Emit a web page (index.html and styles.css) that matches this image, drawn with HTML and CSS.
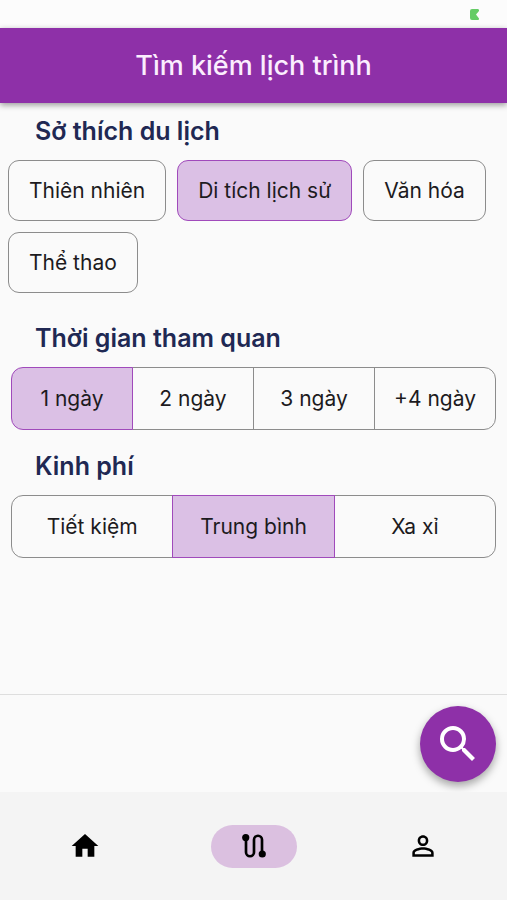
FILE: index.html
```html
<!DOCTYPE html>
<html lang="vi">
<head>
<meta charset="utf-8">
<meta name="viewport" content="width=device-width, initial-scale=1">
<title>Tìm kiếm lịch trình</title>
<link rel="stylesheet" href="styles.css">
</head>
<body>
<div class="status-bar">
  <svg class="battery" viewBox="0 0 10 11" aria-hidden="true"><path d="M2 0H8Q9.500 .3 9 2L6 5.500 9 9.500Q9.500 10.500 8 11H2Q0 11 0 9V2Q0 0 2 0Z"/></svg>
</div>
<header class="app-bar"><h1>Tìm kiếm lịch trình</h1></header>
<main class="content">
  <section class="group interests">
    <h2>Sở thích du lịch</h2>
    <div class="chips">
      <button type="button" class="chip" aria-pressed="false">Thiên nhiên</button>
      <button type="button" class="chip" aria-pressed="true">Di tích lịch sử</button>
      <button type="button" class="chip" aria-pressed="false">Văn hóa</button>
      <button type="button" class="chip" aria-pressed="false">Thể thao</button>
    </div>
  </section>
  <section class="group">
    <h2>Thời gian tham quan</h2>
    <div class="segments">
      <button type="button" class="segment" aria-pressed="true">1 ngày</button>
      <button type="button" class="segment" aria-pressed="false">2 ngày</button>
      <button type="button" class="segment" aria-pressed="false">3 ngày</button>
      <button type="button" class="segment" aria-pressed="false">+4 ngày</button>
    </div>
  </section>
  <section class="group">
    <h2>Kinh phí</h2>
    <div class="segments">
      <button type="button" class="segment" aria-pressed="false">Tiết kiệm</button>
      <button type="button" class="segment" aria-pressed="true">Trung bình</button>
      <button type="button" class="segment" aria-pressed="false">Xa xỉ</button>
    </div>
  </section>
</main>
<div class="action-bar">
  <button type="button" class="search" aria-label="Tìm kiếm">
    <svg viewBox="0 0 24 24" aria-hidden="true"><path d="M15.500 14h-.79l-.28-.27A6.471 6.471 0 0 0 16 9.500 6.500 6.500 0 1 0 9.500 16c1.610 0 3.090-.59 4.230-1.570l.27.28v.79l5 4.990L20.490 19l-4.990-5zm-6 0C7.010 14 5 11.990 5 9.500S7.010 5 9.500 5 14 7.010 14 9.500 11.990 14 9.500 14z"/></svg>
  </button>
</div>
<nav class="nav">
  <a href="#home" class="nav-item" aria-label="Trang chủ"><span class="indicator">
    <svg viewBox="0 0 24 24" aria-hidden="true"><path d="M10 20v-6h4v6h5v-8h3L12 3 2 12h3v8z"/></svg></span></a>
  <a href="#route" class="nav-item" aria-label="Lịch trình" aria-current="page"><span class="indicator">
    <svg viewBox="0 0 24 24" aria-hidden="true"><path d="M6 5.700v11a3 3 0 0 0 6 0v-9.400a3 3 0 0 1 6 0v11" fill="none" stroke="currentColor" stroke-width="2"/><circle cx="5.800" cy="5.700" r="2.700"/><circle cx="18.200" cy="18" r="2.700"/></svg></span></a>
  <a href="#profile" class="nav-item" aria-label="Tài khoản"><span class="indicator">
    <svg viewBox="0 0 24 24" aria-hidden="true"><path d="M12 5.900a2.100 2.100 0 1 1 0 4.200 2.100 2.100 0 0 1 0-4.200m0 9c2.970 0 6.100 1.460 6.100 2.100v1.100H5.900V17c0-.64 3.130-2.100 6.100-2.100M12 4C9.790 4 8 5.790 8 8s1.790 4 4 4 4-1.790 4-4-1.790-4-4-4zm0 9c-2.670 0-8 1.340-8 4v3h16v-3c0-2.660-5.330-4-8-4z"/></svg></span></a>
</nav>
</body>
</html>
```
FILE: styles.css
```css
* {
  box-sizing: border-box;
}

body {
  margin: 0;
  min-height: 100vh;
  display: flex;
  flex-direction: column;
  background: #fafafa;
  color: #1d1b1e;
  font-family: Inter, "Noto Sans", sans-serif;
}

button {
  font: inherit;
  color: inherit;
  margin: 0;
  cursor: pointer;
}

svg {
  display: block;
  fill: currentColor;
}

.status-bar {
  height: 28px;
  display: flex;
  justify-content: flex-end;
  align-items: center;
  padding: 0 27px;
  background: #fcfcfc;
}

.battery {
  width: 10px;
  height: 11px;
  color: #65cc66;
}

.app-bar {
  height: 75px;
  display: flex;
  align-items: center;
  justify-content: center;
  background: #8e30a8;
  color: #fbeefe;
  box-shadow: 0 2px 6px rgba(0, 0, 0, 0.4);
}

h1 {
  margin: 0;
  font-size: 27px;
  line-height: 32px;
  font-weight: 500;
}

.content {
  flex: 1;
}

.group {
  padding: 0 11px;
  margin-bottom: 8px;
}

.interests {
  padding: 0 8px;
  margin-bottom: 17px;
}

h2 {
  margin: 0;
  padding: 12px 24px 13px;
  font-size: 25px;
  line-height: 32px;
  font-weight: 600;
  color: #202853;
}

.interests h2 {
  padding-left: 27px;
}

.chips {
  display: flex;
  flex-wrap: wrap;
  gap: 11px;
}

.chip {
  height: 61px;
  padding: 0 20px;
  border: 1px solid #8c8c8c;
  border-radius: 11px;
  background: transparent;
  font-size: 21px;
}

.segments {
  display: flex;
}

.segment {
  flex: 1;
  height: 63px;
  padding: 0;
  border: 1px solid #8c8c8c;
  background: transparent;
  font-size: 21px;
}

.segment + .segment {
  margin-left: -1px;
}

.segment:first-child {
  border-radius: 12px 0 0 12px;
}

.segment:last-child {
  border-radius: 0 12px 12px 0;
}

.chip[aria-pressed="true"],
.segment[aria-pressed="true"] {
  z-index: 1;
  border-color: #a04abb;
  background: #dbc0e5;
}

.action-bar {
  height: 98px;
  display: flex;
  justify-content: flex-end;
  align-items: center;
  padding: 0 11px;
  border-top: 1px solid #dedede;
}

.search {
  width: 76px;
  height: 76px;
  display: grid;
  place-items: center;
  padding: 0;
  border: 0;
  border-radius: 50%;
  background: #8e30a8;
  color: #fff;
  box-shadow: 0 4px 8px rgba(0, 0, 0, 0.35);
}

.search svg {
  width: 48px;
  height: 48px;
}

.nav {
  height: 108px;
  display: flex;
  align-items: center;
  background: #f4f4f4;
}

.nav-item {
  flex: 1;
  display: flex;
  justify-content: center;
  color: #000;
}

.indicator {
  width: 86px;
  height: 43px;
  display: grid;
  place-items: center;
  border-radius: 22px;
}

.nav-item[aria-current="page"] .indicator {
  background: #dbc0e0;
}

.indicator svg {
  width: 32px;
  height: 32px;
}
```
